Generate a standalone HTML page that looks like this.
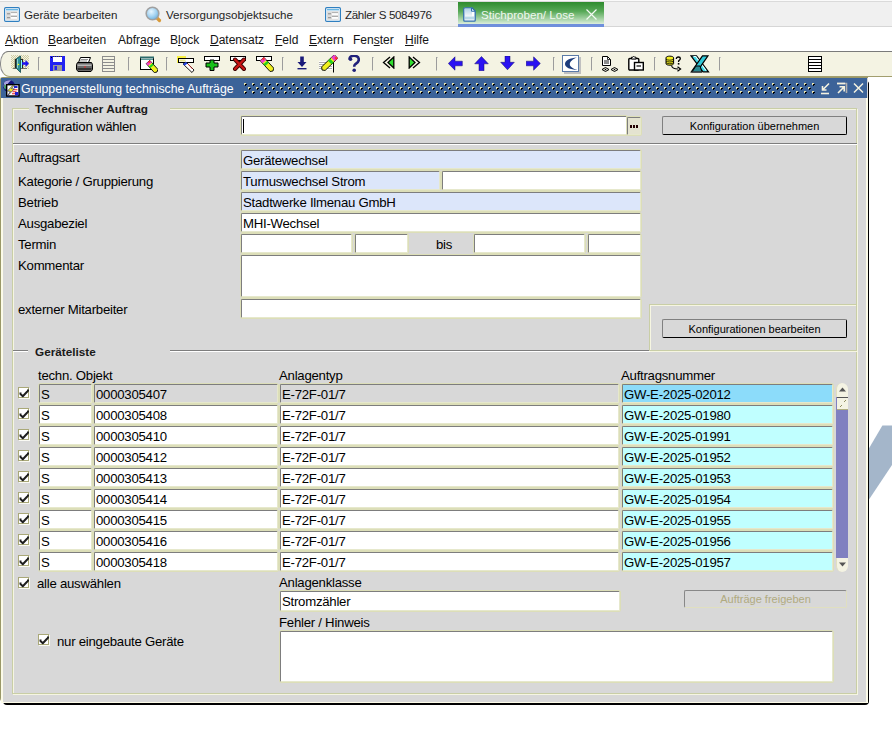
<!DOCTYPE html><html><head><meta charset="utf-8"><style>
*{margin:0;padding:0;box-sizing:border-box}
html,body{width:892px;height:734px;overflow:hidden;background:#fff;font-family:"Liberation Sans",sans-serif;color:#000}
.ab{position:absolute}
.t{position:absolute;white-space:nowrap;line-height:1}
.f{position:absolute;border-radius:1.5px;border:1px solid;border-color:#7d7d7d #e6e8cc #e6e8cc #7d7d7d;box-shadow:0 0 0 1px #dcdeb8;background:#fff;overflow:hidden}
.fb{background:#dce6fa}
.fg{background:#d8d8d8}
.fc{background:#c0ffff}
.fh{background:#8cdcfa}
.ft{position:absolute;left:1px;white-space:nowrap;line-height:1;font-size:13.2px;letter-spacing:-0.25px}
.cb{position:absolute;width:11px;height:11px;background:#fff;border:1px solid #a9a878;box-shadow:1px 1px 0 #fafaf4}
.lbl{position:absolute;white-space:nowrap;line-height:1;font-size:13.2px;letter-spacing:-0.25px}
.btn{position:absolute;border:1px solid;border-color:#808080 #000 #000 #808080;border-radius:2px;background:#d8d8d8;font-size:11px;text-align:center;line-height:1}
.sep{position:absolute;top:56px;width:2px;height:17px;border-left:1px solid #a0a0a0}
</style></head><body>
<div class="ab" style="left:0;top:0;width:892px;height:27px;background:#f0f0f0;border-top:1px solid #fafafa"></div>
<div class="ab" style="left:0;top:1px;width:892px;height:1px;background:#dadada"></div>
<div class="ab" style="left:0;top:26px;width:892px;height:1px;background:#d6d6d6"></div>
<svg class="ab" style="left:4px;top:7px" width="16" height="15" viewBox="0 0 16 15"><rect x="0.6" y="0.6" width="14.8" height="13.8" rx="1.2" fill="#fff" stroke="#2f7fc0" stroke-width="1.2"/><rect x="2" y="2.1" width="12" height="1.3" fill="#5aaee0"/><rect x="2" y="4.2" width="11.7" height="8.6" fill="#dadada"/><rect x="3" y="6.3" width="3" height="1" fill="#8a8a8a"/><rect x="3" y="10.2" width="3" height="1" fill="#8a8a8a"/><rect x="7" y="5.3" width="6" height="2.6" fill="#fff"/><rect x="7" y="5.3" width="6" height=".8" fill="#999"/><rect x="7" y="9.2" width="6" height="2.6" fill="#fff"/><rect x="7" y="9.2" width="6" height=".8" fill="#999"/></svg>
<div class="t" style="left:24px;top:9px;font-size:11.6px;color:#1e1e1e">Geräte bearbeiten</div>
<svg class="ab" style="left:144px;top:5px" width="19" height="19" viewBox="0 0 19 19"><defs><radialGradient id="lg" cx=".4" cy=".35" r=".7"><stop offset="0" stop-color="#e8f6ff"/><stop offset=".6" stop-color="#9fd0f0"/><stop offset="1" stop-color="#6aaedc"/></radialGradient></defs><path d="M12.5 12.5 L15.5 15.5" stroke="#d89a3a" stroke-width="3.2" stroke-linecap="round"/><circle cx="8.5" cy="8.5" r="6.3" fill="url(#lg)" stroke="#a0a0a0" stroke-width="1.6"/></svg>
<div class="t" style="left:166px;top:9px;font-size:11.6px;color:#1e1e1e">Versorgungsobjektsuche</div>
<svg class="ab" style="left:325px;top:7px" width="16" height="15" viewBox="0 0 16 15"><rect x="0.6" y="0.6" width="14.8" height="13.8" rx="1.2" fill="#fff" stroke="#2f7fc0" stroke-width="1.2"/><rect x="2" y="2.1" width="12" height="1.3" fill="#5aaee0"/><rect x="2" y="4.2" width="11.7" height="8.6" fill="#dadada"/><rect x="3" y="6.3" width="3" height="1" fill="#8a8a8a"/><rect x="3" y="10.2" width="3" height="1" fill="#8a8a8a"/><rect x="7" y="5.3" width="6" height="2.6" fill="#fff"/><rect x="7" y="5.3" width="6" height=".8" fill="#999"/><rect x="7" y="9.2" width="6" height="2.6" fill="#fff"/><rect x="7" y="9.2" width="6" height=".8" fill="#999"/></svg>
<div class="t" style="left:345px;top:9px;font-size:11.6px;letter-spacing:-0.35px;color:#1e1e1e">Zähler S 5084976</div>
<div class="ab" style="left:458px;top:2px;width:146px;height:23px;background:linear-gradient(#2e8b2e 0%,#56a856 40%,#a8d4a8 75%,#e6f2e6 100%)"></div>
<div class="ab" style="left:458px;top:24px;width:146px;height:3px;background:#6f8fdc"></div>
<svg class="ab" style="left:463px;top:7px" width="13" height="15" viewBox="0 0 13 15"><defs><linearGradient id="dg" x1="0" y1="0" x2="0" y2="1"><stop offset="0" stop-color="#b4d4e8"/><stop offset="1" stop-color="#f0f6fa"/></linearGradient></defs><path d="M1.5 0.8 H9 L12.2 4 V13.2 Q12.2 14.2 11.2 14.2 H1.8 Q0.8 14.2 0.8 13.2 V1.8 Q0.8 0.8 1.8 0.8Z" fill="#fff" stroke="#2f6eae" stroke-width="1.3"/><rect x="2" y="2" width="7" height="7" fill="url(#dg)"/><rect x="2" y="9.5" width="9" height="3" fill="#b8d8e8"/><path d="M8.5 1 V3.6 Q8.5 4.3 9.2 4.3 H12" fill="none" stroke="#2f6eae" stroke-width="1.1"/></svg>
<div class="t" style="left:481px;top:9px;font-size:11.6px;color:#f0f8f0">Stichproben/ Lose</div>
<svg class="ab" style="left:586px;top:9px" width="11" height="11" viewBox="0 0 11 11"><path d="M0.5 0.5 L10.5 10.5 M10.5 0.5 L0.5 10.5" stroke="#f4faf4" stroke-width="1.2"/></svg>
<div class="t" style="left:5px;top:34px;font-size:12px;color:#141414"><u>A</u>ktion</div>
<div class="t" style="left:48px;top:34px;font-size:12px;color:#141414"><u>B</u>earbeiten</div>
<div class="t" style="left:118px;top:34px;font-size:12px;color:#141414">Abfr<u>a</u>ge</div>
<div class="t" style="left:170px;top:34px;font-size:12px;color:#141414">B<u>l</u>ock</div>
<div class="t" style="left:210px;top:34px;font-size:12px;color:#141414"><u>D</u>atensatz</div>
<div class="t" style="left:275px;top:34px;font-size:12px;color:#141414"><u>F</u>eld</div>
<div class="t" style="left:309px;top:34px;font-size:12px;color:#141414"><u>E</u>xtern</div>
<div class="t" style="left:353px;top:34px;font-size:12px;color:#141414">Fen<u>s</u>ter</div>
<div class="t" style="left:405px;top:34px;font-size:12px;color:#141414"><u>H</u>ilfe</div>
<div class="ab" style="left:0;top:51px;width:900px;height:26px;background:#f4f3e3;border-top:1px solid #7a7a7a;border-left:1px solid #8a8a8a;border-radius:8px 0 0 10px / 12px 0 0 12px;border-bottom:1px solid #a29e6e"></div>
<svg class="ab" style="left:860px;top:420px" width="32" height="90" viewBox="860 420 32 90"><polygon points="882.4,425.6 892,425.6 892,465 868,501 868,450" fill="#a4b6ca"/></svg>
<div class="ab" style="left:3px;top:81px;width:866px;height:624px;background:#000;border-radius:0 3px 4px 4px"></div>
<div class="ab" style="left:0;top:77px;width:868px;height:626px;background:#d8d8d8;border-left:1px solid #9a9868;border-top:1px solid #9a9868;border-radius:3px 0 3px 5px"></div>
<div class="ab" style="left:1px;top:98px;width:2px;height:604px;background:#fcfbe8"></div>
<div class="ab" style="left:1px;top:702px;width:866px;height:1px;background:#fcfbe8"></div>
<div class="ab" style="left:866px;top:98px;width:2px;height:605px;background:#fcfbe8"></div>
<div class="ab" style="left:1px;top:78px;width:866px;height:20px;background:#3c6399"></div>
<svg class="ab" style="left:244px;top:83px" width="572" height="12"><defs><pattern id="dp" width="8" height="8" patternUnits="userSpaceOnUse"><rect x="0" y="0" width="2" height="1" fill="#e8e4b0"/><rect x="0" y="1" width="1" height="1" fill="#e8e4b0"/><rect x="1" y="1" width="2" height="1" fill="#000"/><rect x="1" y="2" width="1" height="1" fill="#000"/><rect x="4" y="4" width="2" height="1" fill="#e8e4b0"/><rect x="4" y="5" width="1" height="1" fill="#e8e4b0"/><rect x="5" y="5" width="2" height="1" fill="#000"/><rect x="5" y="6" width="1" height="1" fill="#000"/></pattern></defs><rect width="572" height="12" fill="url(#dp)"/></svg>
<svg class="ab" style="left:2px;top:79px" width="18" height="18" viewBox="0 0 18 18"><circle cx="7" cy="7" r="6" fill="#12127a"/><path d="M2 4 C3 2 6 1 9 1.5 C7 3 5 5 4 9 C3 10 2 9 1.5 7Z" fill="#c0b8f0" opacity=".85"/><path d="M2 6 C3 5 4 6 4 8 C4 10 3 11 2.5 10Z" fill="#3a9a5a"/><rect x="4.7" y="5.7" width="12.3" height="11.3" fill="#fff" stroke="#000" stroke-width="1.4"/><rect x="12" y="7" width="3.5" height="2" fill="#2020d0"/><path d="M10 10.7 H15.5 M10.5 12.7 H14.5 M10 14.7 H13" stroke="#f02020" stroke-width="1.1"/><rect x="13" y="13" width="3.3" height="3.3" fill="#2020d0"/><polygon points="11.2,6 5.2,12.2 8.4,12.2 5.6,16.8 12.4,9.8 9.4,9.8 12.4,6" fill="#f8f020" stroke="#10106a" stroke-width=".6"/></svg>
<div class="t" style="left:21px;top:83px;font-size:12.3px;color:#fff">Gruppenerstellung technische Aufträge</div>
<svg class="ab" style="left:819px;top:82px" width="46" height="13" viewBox="0 0 46 13"><g stroke="#f4f2e0" stroke-width="1.6" fill="none"><path d="M2 11.5 H10"/><path d="M10 1.5 L3.5 8 M3.5 4 V8 H7.5"/><path d="M18 1.5 H27.5 V11" stroke="#b0b0b0"/><path d="M18 1.5 H26"/><path d="M19 11 L25 5 M20.5 4.8 H25.2 V9.5"/><path d="M35 1.5 L44 10.5 M44 1.5 L35 10.5" stroke-width="1.5"/></g></svg>
<div class="ab" style="left:12px;top:108px;width:845px;height:586px;border:1px solid #c9cea6;box-shadow:1px 1px 0 #f6f6e2, inset 1px 1px 0 #f6f6e2"></div>
<div class="ab" style="left:29px;top:102px;width:141px;height:12px;background:#d8d8d8"></div>
<div class="t" style="left:35px;top:103px;font-size:11.75px;font-weight:bold;color:#1a1a1a">Technischer Auftrag</div>
<div class="ab" style="left:13px;top:143px;width:844px;height:1px;background:#7d7d7d"></div>
<div class="ab" style="left:13px;top:144px;width:844px;height:1px;background:#fff"></div>
<div class="ab" style="left:13px;top:350px;width:15px;height:1px;background:#7d7d7d"></div>
<div class="ab" style="left:13px;top:351px;width:15px;height:1px;background:#fff"></div>
<div class="ab" style="left:170px;top:350px;width:480px;height:1px;background:#7d7d7d"></div>
<div class="ab" style="left:170px;top:351px;width:480px;height:1px;background:#fff"></div>
<div class="t" style="left:35px;top:346px;font-size:11.75px;font-weight:bold;color:#1a1a1a">Geräteliste</div>
<div class="ab" style="left:649px;top:304px;width:208px;height:47px;border:1px solid #c9cea6;box-shadow:1px 1px 0 #f6f6e2, inset 1px 1px 0 #f6f6e2"></div>
<div class="lbl" style="left:18px;top:120px">Konfiguration wählen</div>
<div class="lbl" style="left:18px;top:151px">Auftragsart</div>
<div class="lbl" style="left:18px;top:175px">Kategorie / Gruppierung</div>
<div class="lbl" style="left:18px;top:196px">Betrieb</div>
<div class="lbl" style="left:18px;top:217px">Ausgabeziel</div>
<div class="lbl" style="left:18px;top:238px">Termin</div>
<div class="lbl" style="left:18px;top:259px">Kommentar</div>
<div class="lbl" style="left:18px;top:303px">externer Mitarbeiter</div>
<div class="f " style="left:241px;top:116px;width:386px;height:19px"></div>
<div class="ab" style="left:243px;top:119px;width:1px;height:14px;background:#000"></div>
<div class="f" style="left:627px;top:117px;width:14px;height:18px;background:#e4e3d0"></div>
<div class="ab" style="left:630px;top:125px;width:9px;height:3px;background:repeating-linear-gradient(90deg,#200 0 2px,transparent 2px 3px)"></div>
<div class="btn" style="left:662px;top:116px;width:185px;height:19px;padding-top:4px">Konfiguration übernehmen</div>
<div class="f fb" style="left:241px;top:150px;width:400px;height:19px"><div class="ft" style="top:3px">Gerätewechsel</div></div>
<div class="f fb" style="left:241px;top:171px;width:199px;height:19px"><div class="ft" style="top:3px">Turnuswechsel Strom</div></div>
<div class="f " style="left:442px;top:171px;width:199px;height:19px"></div>
<div class="f fb" style="left:241px;top:192px;width:400px;height:19px"><div class="ft" style="top:3px">Stadtwerke Ilmenau GmbH</div></div>
<div class="f " style="left:241px;top:213px;width:400px;height:19px"><div class="ft" style="top:3px">MHI-Wechsel</div></div>
<div class="f " style="left:241px;top:234px;width:111px;height:19px"></div>
<div class="f " style="left:355px;top:234px;width:53px;height:19px"></div>
<div class="lbl" style="left:436px;top:238px">bis</div>
<div class="f " style="left:474px;top:234px;width:111px;height:19px"></div>
<div class="f " style="left:588px;top:234px;width:53px;height:19px"></div>
<div class="f " style="left:241px;top:255px;width:400px;height:42px"></div>
<div class="f " style="left:241px;top:299px;width:400px;height:19px"></div>
<div class="btn" style="left:662px;top:319px;width:185px;height:19px;padding-top:4px">Konfigurationen bearbeiten</div>
<div class="lbl" style="left:38px;top:369px">techn. Objekt</div>
<div class="lbl" style="left:279px;top:369px">Anlagentyp</div>
<div class="lbl" style="left:621px;top:369px">Auftragsnummer</div>
<div class="cb" style="left:18px;top:387px"><svg class="ab" style="left:0;top:0" width="10" height="10" viewBox="0 0 10 10"><path d="M1.5 4.5 V6 L3.8 8.2 L9 2.8 V1.5" stroke="#1e1e1e" stroke-width="2" fill="none" stroke-linejoin="round"/></svg></div>
<div class="f fg" style="left:39px;top:384px;width:53px;height:19px"><div class="ft" style="top:3px">S</div></div>
<div class="f fg" style="left:94px;top:384px;width:184px;height:19px"><div class="ft" style="top:3px">0000305407</div></div>
<div class="f fg" style="left:280px;top:384px;width:339px;height:19px"><div class="ft" style="top:3px">E-72F-01/7</div></div>
<div class="f fh" style="left:622px;top:384px;width:211px;height:19px"><div class="ft" style="top:3px">GW-E-2025-02012</div></div>
<div class="cb" style="left:18px;top:408px"><svg class="ab" style="left:0;top:0" width="10" height="10" viewBox="0 0 10 10"><path d="M1.5 4.5 V6 L3.8 8.2 L9 2.8 V1.5" stroke="#1e1e1e" stroke-width="2" fill="none" stroke-linejoin="round"/></svg></div>
<div class="f " style="left:39px;top:405px;width:53px;height:19px"><div class="ft" style="top:3px">S</div></div>
<div class="f " style="left:94px;top:405px;width:184px;height:19px"><div class="ft" style="top:3px">0000305408</div></div>
<div class="f " style="left:280px;top:405px;width:339px;height:19px"><div class="ft" style="top:3px">E-72F-01/7</div></div>
<div class="f fc" style="left:622px;top:405px;width:211px;height:19px"><div class="ft" style="top:3px">GW-E-2025-01980</div></div>
<div class="cb" style="left:18px;top:429px"><svg class="ab" style="left:0;top:0" width="10" height="10" viewBox="0 0 10 10"><path d="M1.5 4.5 V6 L3.8 8.2 L9 2.8 V1.5" stroke="#1e1e1e" stroke-width="2" fill="none" stroke-linejoin="round"/></svg></div>
<div class="f " style="left:39px;top:426px;width:53px;height:19px"><div class="ft" style="top:3px">S</div></div>
<div class="f " style="left:94px;top:426px;width:184px;height:19px"><div class="ft" style="top:3px">0000305410</div></div>
<div class="f " style="left:280px;top:426px;width:339px;height:19px"><div class="ft" style="top:3px">E-72F-01/7</div></div>
<div class="f fc" style="left:622px;top:426px;width:211px;height:19px"><div class="ft" style="top:3px">GW-E-2025-01991</div></div>
<div class="cb" style="left:18px;top:450px"><svg class="ab" style="left:0;top:0" width="10" height="10" viewBox="0 0 10 10"><path d="M1.5 4.5 V6 L3.8 8.2 L9 2.8 V1.5" stroke="#1e1e1e" stroke-width="2" fill="none" stroke-linejoin="round"/></svg></div>
<div class="f " style="left:39px;top:447px;width:53px;height:19px"><div class="ft" style="top:3px">S</div></div>
<div class="f " style="left:94px;top:447px;width:184px;height:19px"><div class="ft" style="top:3px">0000305412</div></div>
<div class="f " style="left:280px;top:447px;width:339px;height:19px"><div class="ft" style="top:3px">E-72F-01/7</div></div>
<div class="f fc" style="left:622px;top:447px;width:211px;height:19px"><div class="ft" style="top:3px">GW-E-2025-01952</div></div>
<div class="cb" style="left:18px;top:471px"><svg class="ab" style="left:0;top:0" width="10" height="10" viewBox="0 0 10 10"><path d="M1.5 4.5 V6 L3.8 8.2 L9 2.8 V1.5" stroke="#1e1e1e" stroke-width="2" fill="none" stroke-linejoin="round"/></svg></div>
<div class="f " style="left:39px;top:468px;width:53px;height:19px"><div class="ft" style="top:3px">S</div></div>
<div class="f " style="left:94px;top:468px;width:184px;height:19px"><div class="ft" style="top:3px">0000305413</div></div>
<div class="f " style="left:280px;top:468px;width:339px;height:19px"><div class="ft" style="top:3px">E-72F-01/7</div></div>
<div class="f fc" style="left:622px;top:468px;width:211px;height:19px"><div class="ft" style="top:3px">GW-E-2025-01953</div></div>
<div class="cb" style="left:18px;top:492px"><svg class="ab" style="left:0;top:0" width="10" height="10" viewBox="0 0 10 10"><path d="M1.5 4.5 V6 L3.8 8.2 L9 2.8 V1.5" stroke="#1e1e1e" stroke-width="2" fill="none" stroke-linejoin="round"/></svg></div>
<div class="f " style="left:39px;top:489px;width:53px;height:19px"><div class="ft" style="top:3px">S</div></div>
<div class="f " style="left:94px;top:489px;width:184px;height:19px"><div class="ft" style="top:3px">0000305414</div></div>
<div class="f " style="left:280px;top:489px;width:339px;height:19px"><div class="ft" style="top:3px">E-72F-01/7</div></div>
<div class="f fc" style="left:622px;top:489px;width:211px;height:19px"><div class="ft" style="top:3px">GW-E-2025-01954</div></div>
<div class="cb" style="left:18px;top:513px"><svg class="ab" style="left:0;top:0" width="10" height="10" viewBox="0 0 10 10"><path d="M1.5 4.5 V6 L3.8 8.2 L9 2.8 V1.5" stroke="#1e1e1e" stroke-width="2" fill="none" stroke-linejoin="round"/></svg></div>
<div class="f " style="left:39px;top:510px;width:53px;height:19px"><div class="ft" style="top:3px">S</div></div>
<div class="f " style="left:94px;top:510px;width:184px;height:19px"><div class="ft" style="top:3px">0000305415</div></div>
<div class="f " style="left:280px;top:510px;width:339px;height:19px"><div class="ft" style="top:3px">E-72F-01/7</div></div>
<div class="f fc" style="left:622px;top:510px;width:211px;height:19px"><div class="ft" style="top:3px">GW-E-2025-01955</div></div>
<div class="cb" style="left:18px;top:534px"><svg class="ab" style="left:0;top:0" width="10" height="10" viewBox="0 0 10 10"><path d="M1.5 4.5 V6 L3.8 8.2 L9 2.8 V1.5" stroke="#1e1e1e" stroke-width="2" fill="none" stroke-linejoin="round"/></svg></div>
<div class="f " style="left:39px;top:531px;width:53px;height:19px"><div class="ft" style="top:3px">S</div></div>
<div class="f " style="left:94px;top:531px;width:184px;height:19px"><div class="ft" style="top:3px">0000305416</div></div>
<div class="f " style="left:280px;top:531px;width:339px;height:19px"><div class="ft" style="top:3px">E-72F-01/7</div></div>
<div class="f fc" style="left:622px;top:531px;width:211px;height:19px"><div class="ft" style="top:3px">GW-E-2025-01956</div></div>
<div class="cb" style="left:18px;top:555px"><svg class="ab" style="left:0;top:0" width="10" height="10" viewBox="0 0 10 10"><path d="M1.5 4.5 V6 L3.8 8.2 L9 2.8 V1.5" stroke="#1e1e1e" stroke-width="2" fill="none" stroke-linejoin="round"/></svg></div>
<div class="f " style="left:39px;top:552px;width:53px;height:19px"><div class="ft" style="top:3px">S</div></div>
<div class="f " style="left:94px;top:552px;width:184px;height:19px"><div class="ft" style="top:3px">0000305418</div></div>
<div class="f " style="left:280px;top:552px;width:339px;height:19px"><div class="ft" style="top:3px">E-72F-01/7</div></div>
<div class="f fc" style="left:622px;top:552px;width:211px;height:19px"><div class="ft" style="top:3px">GW-E-2025-01957</div></div>
<div class="ab" style="left:836px;top:397px;width:12px;height:161px;background:#8080c0"></div>
<div class="ab" style="left:836px;top:383px;width:12px;height:14px;background:#f4f3e3;border-radius:6px 6px 0 0;border-left:1px solid #e0dfc0"></div>
<svg class="ab" style="left:839px;top:387px" width="7" height="5"><path d="M0 4.5 L3.5 0.5 L7 4.5Z" fill="#555"/></svg>
<div class="ab" style="left:837px;top:397px;width:11px;height:13px;background:#f4f3e3;border-top:1px solid #555;border-bottom:1px solid #b0ae80"></div>
<svg class="ab" style="left:839px;top:399px" width="8" height="9"><path d="M1 8 L3 6 M5 3 L7 1" stroke="#908e60" stroke-width="1"/></svg>
<div class="ab" style="left:836px;top:558px;width:12px;height:14px;background:#f4f3e3;border-radius:0 0 6px 6px;border-left:1px solid #e0dfc0"></div>
<svg class="ab" style="left:839px;top:562px" width="7" height="5"><path d="M0 0.5 L3.5 4.5 L7 0.5Z" fill="#555"/></svg>
<div class="cb" style="left:18px;top:577px"><svg class="ab" style="left:0;top:0" width="10" height="10" viewBox="0 0 10 10"><path d="M1.5 4.5 V6 L3.8 8.2 L9 2.8 V1.5" stroke="#1e1e1e" stroke-width="2" fill="none" stroke-linejoin="round"/></svg></div>
<div class="lbl" style="left:37px;top:577px">alle auswählen</div>
<div class="lbl" style="left:279px;top:576px">Anlagenklasse</div>
<div class="f " style="left:280px;top:591px;width:340px;height:20px"><div class="ft" style="top:3px">Stromzähler</div></div>
<div class="btn" style="left:684px;top:590px;width:163px;height:18px;padding-top:3px;border-color:#888 #e0dfc0 #e0dfc0 #888;color:#b0aa80">Aufträge freigeben</div>
<div class="lbl" style="left:279px;top:616px">Fehler / Hinweis</div>
<div class="f " style="left:280px;top:631px;width:553px;height:51px"></div>
<div class="cb" style="left:38px;top:634px"><svg class="ab" style="left:0;top:0" width="10" height="10" viewBox="0 0 10 10"><path d="M1.5 4.5 V6 L3.8 8.2 L9 2.8 V1.5" stroke="#1e1e1e" stroke-width="2" fill="none" stroke-linejoin="round"/></svg></div>
<div class="lbl" style="left:57px;top:635px">nur eingebaute Geräte</div>
<svg class="ab" style="left:38px;top:57px" width="3" height="14"><rect x="0" y="0" width="1" height="13.5" fill="#9c9c9c"/><rect x="1" y="0" width="1" height="1" fill="#c8c8c8"/></svg>
<svg class="ab" style="left:128px;top:57px" width="3" height="14"><rect x="0" y="0" width="1" height="13.5" fill="#9c9c9c"/><rect x="1" y="0" width="1" height="1" fill="#c8c8c8"/></svg>
<svg class="ab" style="left:166px;top:57px" width="3" height="14"><rect x="0" y="0" width="1" height="13.5" fill="#9c9c9c"/><rect x="1" y="0" width="1" height="1" fill="#c8c8c8"/></svg>
<svg class="ab" style="left:282px;top:57px" width="3" height="14"><rect x="0" y="0" width="1" height="13.5" fill="#9c9c9c"/><rect x="1" y="0" width="1" height="1" fill="#c8c8c8"/></svg>
<svg class="ab" style="left:372px;top:57px" width="3" height="14"><rect x="0" y="0" width="1" height="13.5" fill="#9c9c9c"/><rect x="1" y="0" width="1" height="1" fill="#c8c8c8"/></svg>
<svg class="ab" style="left:436px;top:57px" width="3" height="14"><rect x="0" y="0" width="1" height="13.5" fill="#9c9c9c"/><rect x="1" y="0" width="1" height="1" fill="#c8c8c8"/></svg>
<svg class="ab" style="left:553px;top:57px" width="3" height="14"><rect x="0" y="0" width="1" height="13.5" fill="#9c9c9c"/><rect x="1" y="0" width="1" height="1" fill="#c8c8c8"/></svg>
<svg class="ab" style="left:591px;top:57px" width="3" height="14"><rect x="0" y="0" width="1" height="13.5" fill="#9c9c9c"/><rect x="1" y="0" width="1" height="1" fill="#c8c8c8"/></svg>
<svg class="ab" style="left:654px;top:57px" width="3" height="14"><rect x="0" y="0" width="1" height="13.5" fill="#9c9c9c"/><rect x="1" y="0" width="1" height="1" fill="#c8c8c8"/></svg>
<svg class="ab" style="left:719px;top:57px" width="3" height="14"><rect x="0" y="0" width="1" height="13.5" fill="#9c9c9c"/><rect x="1" y="0" width="1" height="1" fill="#c8c8c8"/></svg>
<svg class="ab" style="left:10px;top:54px" width="20" height="20" viewBox="0 0 20 20"><defs><pattern id="dith" width="2" height="2" patternUnits="userSpaceOnUse"><rect width="1" height="1" fill="#cfcba0"/><rect x="1" y="1" width="1" height="1" fill="#cfcba0"/></pattern></defs><rect x="1" y="1" width="18" height="14" fill="url(#dith)"/><rect x="4" y="4" width="9" height="10" fill="#cfcb9c"/><path d="M5.5 14.5 V5.5 H12.5 V14.5" stroke="#222" stroke-width="1.2" fill="none"/><path d="M3 14.5 H17" stroke="#555" stroke-width=".8"/><path d="M6.5 4.5 L10.5 2 V18.5 L6.5 14.5 Z" fill="#2d8f95" stroke="#14494d" stroke-width=".8"/><path d="M7.5 5 V14" stroke="#9ad8dc" stroke-width=".9"/><circle cx="8.4" cy="10.5" r=".8" fill="#ff0"/><rect x="11" y="6" width="1" height="8" fill="#8ff"/><path d="M12 8.2 H15.5 V6 L19 9.5 L15.5 13 V10.8 H12 Z" fill="#1a10f0"/></svg>
<svg class="ab" style="left:50px;top:56px" width="15" height="15" viewBox="0 0 15 15"><rect x="0" y="0" width="15" height="15" fill="#2222f2"/><rect x="3" y="1" width="9" height="5" fill="#fff"/><path d="M3 0.5 H12" stroke="#333" stroke-dasharray="1 1"/><rect x="1" y="1" width="1" height="1" fill="#000"/><rect x="3" y="9" width="9" height="6" fill="#9a9a9a"/><rect x="4.5" y="10" width="2.5" height="4" fill="#2222f2"/></svg>
<svg class="ab" style="left:76px;top:57px" width="17" height="15" viewBox="0 0 17 15"><path d="M4.5 0.5 H14.5 L12.5 5.5 H2.5 Z" fill="#fff" stroke="#000" stroke-width="1"/><path d="M5 2.5 H12 M4 4 H11" stroke="#777" stroke-width=".8"/><path d="M1.5 5.5 H15.5 L16.5 7.5 V12.5 L15 14.5 H2 L0.5 12.5 V7.5 Z" fill="#6a6a6a" stroke="#000" stroke-width="1"/><rect x="1.5" y="7.5" width="14" height="1.5" fill="#b8b8b8"/><rect x="1.5" y="11" width="14" height="2" fill="#333"/><rect x="8" y="9.5" width="2" height="1" fill="#f02020"/></svg>
<svg class="ab" style="left:102px;top:56px" width="13" height="16" viewBox="0 0 13 16"><rect x="0.5" y="0.5" width="12" height="15" fill="#f4f3e3" stroke="#8c8c8c"/><path d="M1 3.5H12M1 6.5H12M1 9.5H12M1 12.5H12" stroke="#8c8c8c"/></svg>
<svg class="ab" style="left:140px;top:56px" width="18" height="17" viewBox="0 0 18 17"><rect x="0.5" y="1.5" width="13" height="12" fill="#fff" stroke="#000" stroke-width="1"/><rect x="0" y="0.5" width="14" height="2" fill="#2c6a6a"/><rect x="1" y="3" width="12" height="1" fill="#5a9a9a"/><polygon points="9.78,4.39 17.88,13.39 17.00,16.00 14.32,16.61 6.22,7.61" fill="#f0f020" stroke="#000" stroke-width=".9"/><polygon points="9.78,4.39 11.76,6.59 8.20,9.81 6.22,7.61" fill="#f040d0"/><polygon points="9.78,4.39 10.86,5.59 9.08,7.20 8.00,6.00" fill="#ff3030"/><polygon points="12.48,7.39 13.83,8.89 10.27,12.11 8.92,10.61" fill="#20d020"/></svg>
<svg class="ab" style="left:177px;top:56px" width="18" height="17" viewBox="0 0 18 17"><rect x="0" y="0" width="9" height="7" fill="#f8f040"/><rect x="1.5" y="2.5" width="15" height="4" fill="#fff" stroke="#000" stroke-width="1"/><rect x="2.5" y="3.5" width="6" height="2" fill="#e8e890"/><polygon points="6,8 9,6 17,14 15,16.5" fill="#fff" stroke="#000" stroke-width=".9"/><polygon points="6,8 9,6 10.5,7.5 7.5,9.8" fill="#2040e0"/><path d="M11 8 L15.5 13" stroke="#e03030" stroke-width=".8"/></svg>
<svg class="ab" style="left:204px;top:56px" width="16" height="15" viewBox="0 0 16 15"><rect x="0.5" y="0.5" width="15" height="4" fill="#fff" stroke="#000" stroke-width="1"/><path d="M6 4 H10 V7 H14 V11 H10 V14.5 H6 V11 H2 V7 H6 Z" fill="#18c018" stroke="#000" stroke-width="1"/></svg>
<svg class="ab" style="left:230px;top:56px" width="16" height="15" viewBox="0 0 16 15"><rect x="0.5" y="0.5" width="15" height="4" fill="#fff" stroke="#000" stroke-width="1"/><path d="M5 3.5 L14 13 M14 3.5 L5 13" stroke="#3a0000" stroke-width="4" stroke-linecap="round"/><path d="M5 3.5 L14 13 M14 3.5 L5 13" stroke="#c81414" stroke-width="2.4" stroke-linecap="round"/></svg>
<svg class="ab" style="left:256px;top:56px" width="18" height="16" viewBox="0 0 18 16"><rect x="0.5" y="0.5" width="15" height="4" fill="#fff" stroke="#000" stroke-width="1"/><polygon points="7.84,1.31 17.74,12.11 17.00,15.00 14.06,15.49 4.16,4.69" fill="#f0f020" stroke="#000" stroke-width=".9"/><polygon points="7.84,1.31 10.26,3.95 6.58,7.33 4.16,4.69" fill="#f040d0"/><polygon points="7.84,1.31 9.16,2.75 7.32,4.44 6.00,3.00" fill="#ff3030"/><polygon points="11.14,4.91 12.79,6.71 9.11,10.09 7.46,8.29" fill="#20d020"/></svg>
<svg class="ab" style="left:297px;top:56px" width="10" height="14" viewBox="0 0 10 14"><path d="M3.2 0.5 H6.8 V6 H9.5 L5 11 L0.5 6 H3.2Z" fill="#1a1a7a"/><rect x="0.5" y="12" width="9" height="1.4" fill="#1a1a7a"/></svg>
<svg class="ab" style="left:319px;top:55px" width="19" height="18" viewBox="0 0 19 18"><rect x="0" y="6" width="14" height="9" fill="#fff"/><path d="M0 7.5 H13 M0 9.5 H13 M0 11.5 H13 M0 13.5 H13" stroke="#999" stroke-width=".8"/><path d="M14.5 7 V17.5" stroke="#000" stroke-width="1"/><polygon points="18.74,3.30 6.14,15.45 3.00,15.00 2.66,11.85 15.26,-0.30" fill="#f0f020" stroke="#000" stroke-width=".9"/><polygon points="18.74,3.30 15.66,6.27 12.18,2.67 15.26,-0.30" fill="#f040d0"/><polygon points="18.74,3.30 17.06,4.92 15.32,3.12 17.00,1.50" fill="#ff3030"/><polygon points="14.54,7.35 12.44,9.37 8.96,5.78 11.06,3.75" fill="#20d020"/></svg>
<svg class="ab" style="left:348px;top:55px" width="12" height="18" viewBox="0 0 12 18"><path d="M1.5 4.5 C1.5 1.8 3.8 0.8 6 0.8 C8.8 0.8 10.8 2.3 10.8 4.8 C10.8 7.2 8.8 8.2 7.2 9.3 C6.4 9.9 6.2 10.6 6.2 11.8" stroke="#20207a" stroke-width="2.6" fill="none"/><circle cx="2.5" cy="4.2" r="1.8" fill="#20207a"/><circle cx="6.2" cy="15.3" r="1.8" fill="#20207a"/></svg>
<svg class="ab" style="left:382px;top:56px" width="13" height="13" viewBox="0 0 13 13"><path d="M8 1 L1.5 6.5 L8 12" stroke="#000" stroke-width="1.3" fill="none"/><path d="M11.8 1 V12 L6 6.5 Z" fill="#30e030" stroke="#000" stroke-width="1.3" stroke-linejoin="miter"/></svg>
<svg class="ab" style="left:408px;top:56px" width="13" height="13" viewBox="0 0 13 13"><path d="M5 1 L11.5 6.5 L5 12" stroke="#000" stroke-width="1.3" fill="none"/><path d="M1.2 1 V12 L7 6.5 Z" fill="#30e030" stroke="#000" stroke-width="1.3"/></svg>
<svg class="ab" style="left:448px;top:56px" width="15" height="15" viewBox="0 0 15 15"><path d="M0.3 7.5 L7 0.8 V5.2 H14.3 V9.8 H7 V14.2Z" fill="#2a12f2" stroke="#10086a" stroke-width=".5"/></svg>
<svg class="ab" style="left:474px;top:56px" width="15" height="15" viewBox="0 0 15 15"><path d="M7.5 0.5 L14.3 7.8 H10 V14.8 H5 V7.8 H0.7Z" fill="#2a12f2" stroke="#10086a" stroke-width=".5"/></svg>
<svg class="ab" style="left:500px;top:56px" width="15" height="15" viewBox="0 0 15 15"><path d="M7.5 13.8 L14.3 6.3 H10 V0 H5 V6.3 H0.7Z" fill="#2a12f2" stroke="#10086a" stroke-width=".5"/></svg>
<svg class="ab" style="left:526px;top:56px" width="15" height="15" viewBox="0 0 15 15"><path d="M14.3 7.5 L7.6 0.8 V5.2 H0.2 V9.8 H7.6 V14.2Z" fill="#2a12f2" stroke="#10086a" stroke-width=".5"/></svg>
<svg class="ab" style="left:562px;top:55px" width="19" height="19" viewBox="0 0 19 19"><rect x="2" y="2" width="17" height="17" fill="#c0c0c0"/><rect x="0.5" y="0.5" width="16" height="16" fill="#fff" stroke="#5a7aa8" stroke-width="1"/><path d="M15 2.5 C8 2.8 3 5.5 3 9 C3 12.5 8 14.5 15.5 15 C11 13.8 7.8 11.8 7.8 9.3 C7.8 6.5 11 4 15 2.5Z" fill="#1c3c7c"/></svg>
<svg class="ab" style="left:601px;top:56px" width="19" height="17" viewBox="0 0 19 17"><path d="M1.5 0.5 H6.5 L9.5 3.5 V9.5 H1.5Z" fill="#fff" stroke="#000" stroke-width="1"/><path d="M6.5 0.5 V3.5 H9.5" fill="none" stroke="#000" stroke-width=".8"/><path d="M3 5 H8 M3 7 H8" stroke="#000" stroke-width=".9"/><path d="M1 13.5 L4.5 11.5 L8 13.5 L4.5 15.5Z M10 13.5 L13.5 11.5 L17 13.5 L13.5 15.5Z" fill="none" stroke="#000" stroke-width="1"/><rect x="3.8" y="12.8" width="1.4" height="1.4" fill="#000"/><rect x="12.8" y="12.8" width="1.4" height="1.4" fill="#000"/></svg>
<svg class="ab" style="left:628px;top:56px" width="16" height="15" viewBox="0 0 16 15"><rect x="0.8" y="2.5" width="10" height="11.5" rx="1" fill="#fff" stroke="#000" stroke-width="1.4"/><path d="M3.5 3 V1.2 H5 L5.8 0.3 L6.6 1.2 H8 V3 Z" fill="#fff" stroke="#000" stroke-width="1"/><rect x="6.5" y="6.5" width="8.8" height="7.5" fill="#fff" stroke="#000" stroke-width="1.4"/><path d="M8.5 10 H13" stroke="#000" stroke-width="1.2"/></svg>
<svg class="ab" style="left:665px;top:55px" width="18" height="17" viewBox="0 0 18 17"><path d="M1 2.8 C1 0.6 8.6 0.6 8.6 2.8 V8.6 C8.6 10.8 1 10.8 1 8.6Z" fill="#f4f020" stroke="#000" stroke-width="1"/><path d="M1 4.2 C2.5 5.5 7 5.5 8.6 4.2 M1 6 C2.5 7.3 7 7.3 8.6 6 M1 7.8 C2.5 9.1 7 9.1 8.6 7.8" stroke="#000" stroke-width=".8" fill="none"/><path d="M11.3 4 C11.3 2.5 12.2 2 13.3 2 C14.5 2 15.3 2.7 15.3 3.8 C15.3 5 14 5.3 13.6 6 V7" stroke="#000" stroke-width="1.3" fill="none"/><rect x="12.8" y="8" width="1.6" height="1.6" fill="#000"/><path d="M6.5 10.5 C7 13.5 9 14 13 14" stroke="#000" stroke-width="1.1" fill="none"/><path d="M12.5 11.8 L15.5 14 L12.5 16.2" stroke="#000" stroke-width="1.3" fill="none"/></svg>
<svg class="ab" style="left:690px;top:55px" width="20" height="19" viewBox="0 0 20 19"><path d="M1 0.8 H6.5 L18.5 16.8 H13 Z" fill="#40d8e8" stroke="#000" stroke-width="1.2"/><path d="M3.5 1.5 H5.8 L16 15.5" stroke="#e8ffff" stroke-width="1.2" fill="none"/><path d="M12.5 0.8 H18 L6.8 16.8 H1.3 Z" fill="#30c8d8" stroke="#000" stroke-width="1.2"/><path d="M2 17 L6 11 H10 L12 17Z" fill="#2a8890" stroke="#000" stroke-width="1"/><path d="M1.5 17.3 H12" stroke="#555" stroke-width="1.4"/></svg>
<svg class="ab" style="left:808px;top:56px" width="14" height="16" viewBox="0 0 14 16"><rect x="0.5" y="0.5" width="13" height="15" fill="#fff" stroke="#000"/><path d="M0.5 3.5H13.5M0.5 6.5H13.5M0.5 9.5H13.5M0.5 12.5H13.5" stroke="#000"/></svg>
</body></html>
